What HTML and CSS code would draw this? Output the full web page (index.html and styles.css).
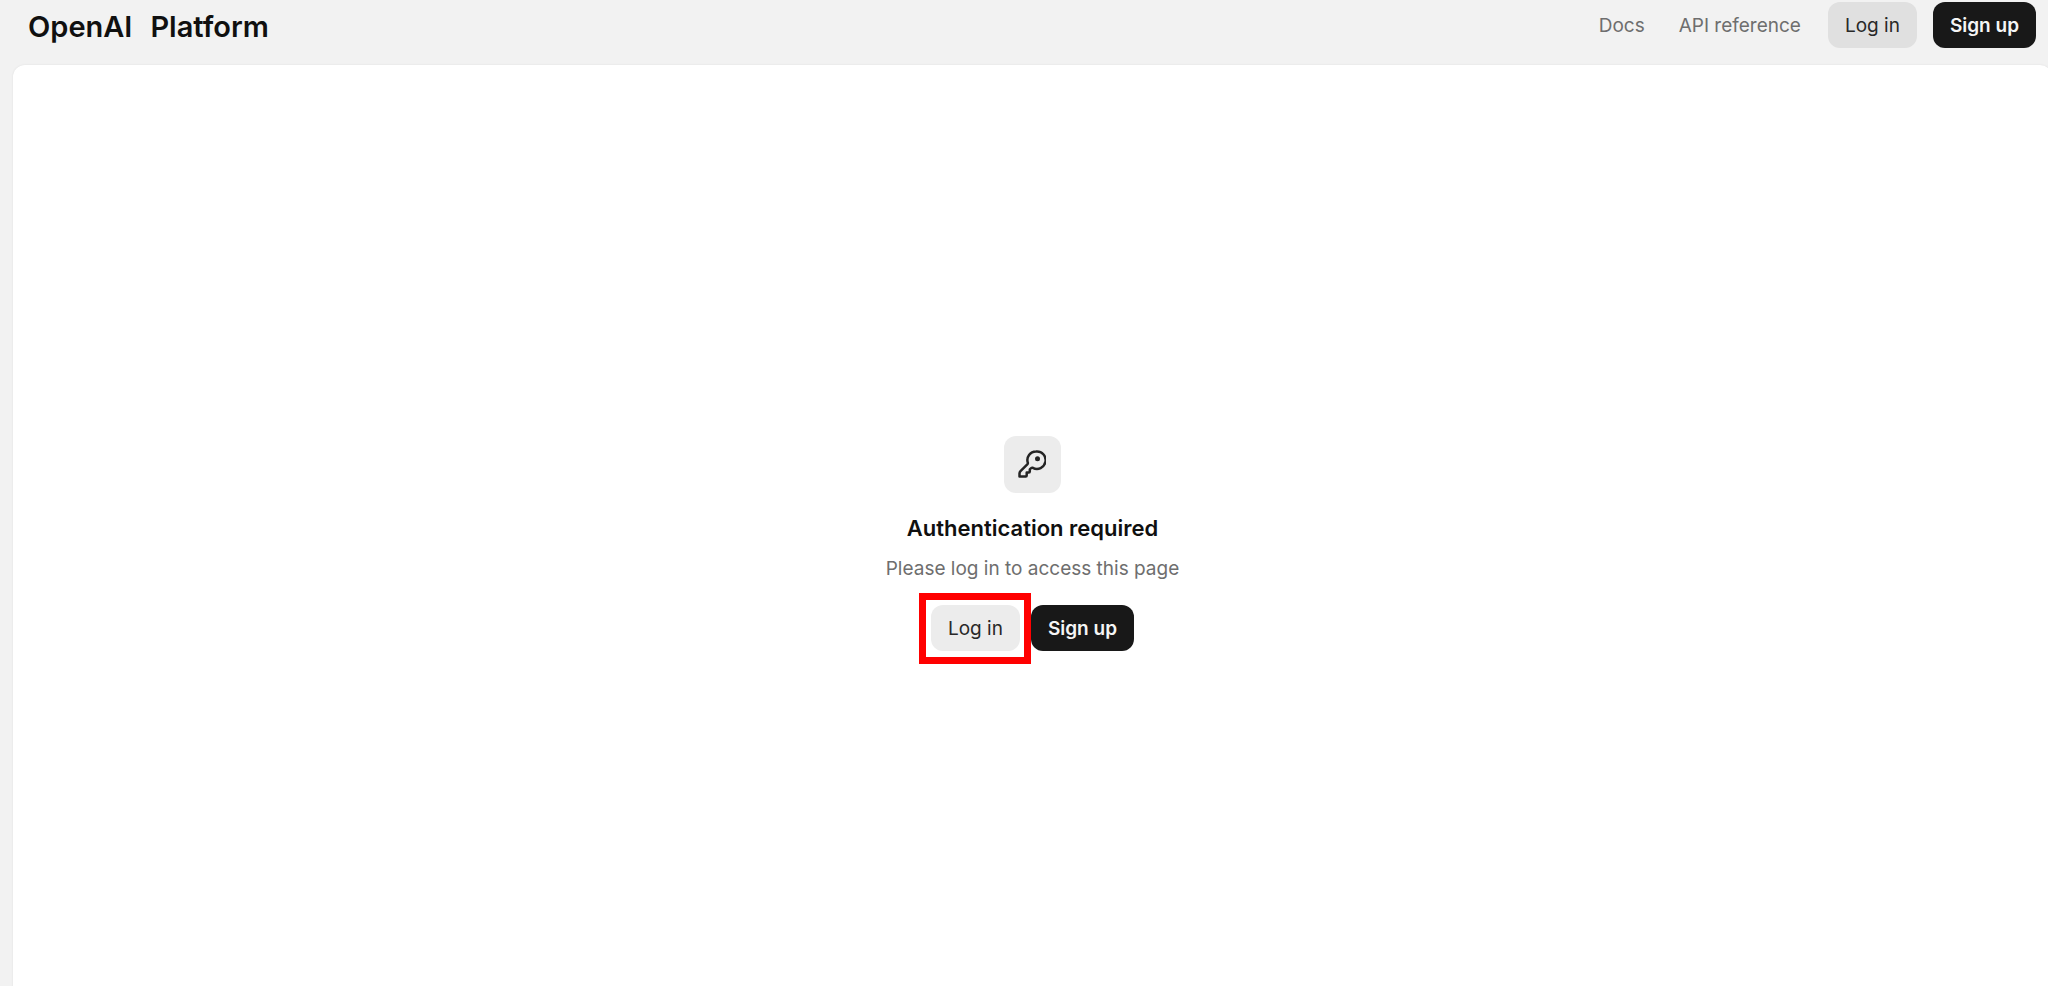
FILE: index.html
```html
<!DOCTYPE html>
<html lang="en">
<head>
<meta charset="utf-8">
<title>OpenAI Platform</title>
<link rel="stylesheet" href="styles.css">
</head>
<body>
<header class="topbar">
  <a class="brand" href="#"><span>OpenAI</span><span>Platform</span></a>
  <nav class="nav">
    <a class="nav-link" href="#">Docs</a>
    <a class="nav-link" href="#">API reference</a>
    <div class="nav-actions">
      <button class="btn btn-strong" type="button">Log in</button>
      <button class="btn btn-dark" type="button">Sign up</button>
    </div>
  </nav>
</header>
<main class="panel">
  <section class="empty">
    <div class="icon-tile">
      <svg class="icon" viewBox="0 0 28 28" fill="none" aria-hidden="true">
        <path d="M18 1.500a8.600 8.600 0 0 0-8.200 11.200c.2.700 0 1.200-.5 1.700L2.500 21.200c-.7.700-1 1.300-1 2.200v3h6.200c.6 0 1-.4 1-1v-3h2.100c.6 0 1-.4 1-1v-2l1.300-1.200c.5-.5 1-.6 1.700-.4A8.700 8.700 0 1 0 18 1.500Z" stroke="currentColor" stroke-width="2.500" stroke-linejoin="round"/>
        <circle cx="19.500" cy="8.800" r="2.500" fill="currentColor"/>
      </svg>
    </div>
    <h1 class="title">Authentication required</h1>
    <p class="text">Please log in to access this page</p>
    <div class="actions">
      <div class="marked"><button class="btn btn-soft" type="button">Log in</button></div>
      <button class="btn btn-dark" type="button">Sign up</button>
    </div>
  </section>
</main>
</body>
</html>
```
FILE: styles.css
```css
* { box-sizing: border-box; }
body {
  margin: 0;
  height: 100vh;
  overflow: hidden;
  background: #f2f2f2;
  color: #101010;
  font-family: Inter, "Liberation Sans", sans-serif;
  font-size: 19px;
}
.topbar {
  display: flex;
  align-items: flex-start;
  justify-content: space-between;
  height: 65px;
  padding: 2px 12px 0 28px;
}
.brand {
  display: flex;
  gap: 18px;
  padding-top: 9px;
  color: inherit;
  font-size: 29px;
  font-weight: 600;
  line-height: 32px;
  text-decoration: none;
}
.nav { display: flex; align-items: center; gap: 34px; }
.nav-link { color: #6e6e6e; line-height: 48px; text-decoration: none; }
.nav-actions { display: flex; gap: 16px; margin-left: -7px; }
.btn {
  height: 46px;
  padding: 1px 17px 0;
  border: 0;
  border-radius: 12px;
  color: #282828;
  font: inherit;
  white-space: nowrap;
}
.btn-strong { background: #e0e0e0; }
.btn-soft { background: #ececec; }
.btn-dark { background: #181818; color: #f5f5f5; font-weight: 600; }
.nav-actions .btn { align-self: flex-start; }
.panel {
  display: flex;
  align-items: center;
  justify-content: center;
  min-height: calc(100vh - 30px);
  margin: 0 -4px 0 13px;
  border-radius: 12px;
  background: #fff;
  box-shadow: 0 0 2px #dcdcdc;
}
.nav { align-items: flex-start; }
.empty { display: flex; flex-direction: column; align-items: center; }
.icon-tile {
  display: grid;
  place-items: center;
  width: 57px;
  height: 57px;
  border-radius: 12px;
  background: #ececec;
}
.icon { width: 28px; height: 28px; color: #242424; }
.title { margin: 20px 0 0; font-size: 22px; font-weight: 600; line-height: 30px; }
.text { margin: 12px 0 0; color: #6e6e6e; line-height: 28px; }
.actions { display: flex; gap: 11px; margin-top: 22px; }
.marked { position: relative; display: flex; }
.marked::after {
  content: "";
  position: absolute;
  inset: -12px -11px -13px -12px;
  border: 7px solid #f00;
  pointer-events: none;
}
```
